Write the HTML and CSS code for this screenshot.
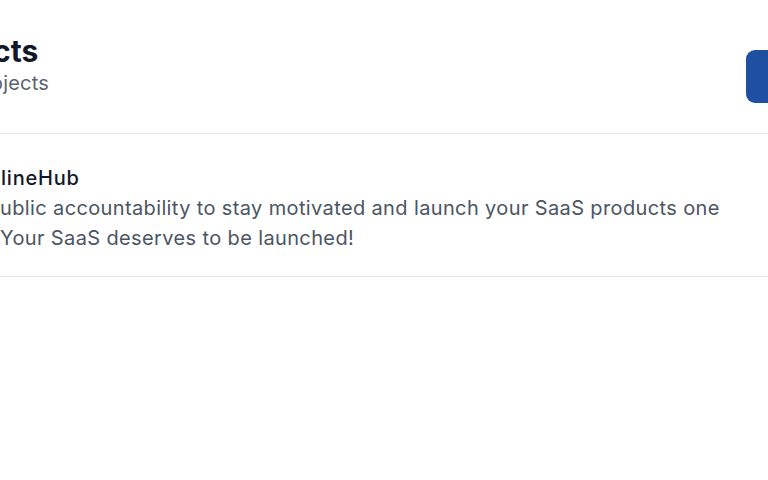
FILE: index.html
```html
<!DOCTYPE html>
<html lang="en">
<head>
    <meta charset="UTF-8">
    <meta name="viewport" content="width=device-width, initial-scale=1.0">
    <title>Projects</title>
    <link rel="stylesheet" href="styles.css">
</head>
<body>
    <div class="page">
        <div class="header">
            <div class="heading">
                <h1>cts</h1>
                <p class="subtitle">ojects</p>
            </div>
            <button class="new-btn" type="button"></button>
        </div>

        <div class="project-list">
            <div class="project">
                <h2>lineHub</h2>
                <p>ublic accountability to stay motivated and launch your SaaS products one<br>Your SaaS deserves to be launched!</p>
            </div>
        </div>
    </div>
</body>
</html>
```

FILE: styles.css
```css
body {
    margin: 0;
    background-color: #ffffff;
    font-family: Inter, "Noto Sans", sans-serif;
    overflow: hidden;
}
.page {
    width: 820px;
}
.header {
    display: flex;
    justify-content: space-between;
    align-items: flex-start;
    padding-top: 33px;
}
.heading h1 {
    margin: 0 0 0 -7px;
    font-size: 30px;
    line-height: 36px;
    font-weight: 700;
    color: #111827;
}
.subtitle {
    margin: 0 0 0 -9px;
    font-size: 20px;
    line-height: 28px;
    letter-spacing: 0.2px;
    color: #5b6370;
}
.new-btn {
    width: 70px;
    height: 53px;
    margin-top: 17px;
    margin-right: 4px;
    border: none;
    border-radius: 9px;
    background-color: #1f4fa3;
}
.project-list {
    margin-top: 30px;
    border-top: 1px solid #e5e7eb;
    border-bottom: 1px solid #e5e7eb;
    box-shadow: 0 2px 3px rgba(0, 0, 0, 0.03);
}
.project {
    padding: 29px 0 23px 0;
}
.project h2 {
    margin: 0 0 0 1px;
    font-size: 20px;
    line-height: 30px;
    font-weight: 500;
    letter-spacing: 0.8px;
    color: #111827;
}
.project p {
    margin: 0;
    font-size: 20px;
    line-height: 30px;
    letter-spacing: 0.37px;
    color: #4b5563;
}
```
